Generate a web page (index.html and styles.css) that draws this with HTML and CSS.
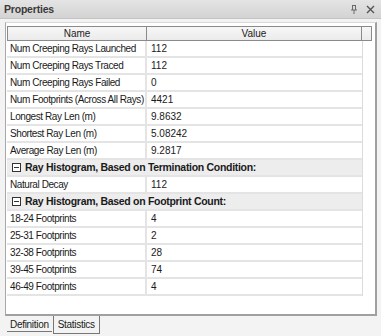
FILE: index.html
```html
<!DOCTYPE html>
<html>
<head>
<meta charset="utf-8">
<link rel="stylesheet" href="styles.css">
</head>
<body>
<div class="win">
  <div class="titlebar">
    <span class="title">Properties</span>
    <span class="tbicons">
      <svg width="8" height="9" viewBox="0 0 8 9"><path d="M2 0.5h4M2.5 0.5v4.5M5.5 0.5v4.5M1 5h6M4 5v4" stroke="#6a6a6a" fill="none" stroke-width="1"/></svg>
      <svg width="9" height="9" viewBox="0 0 9 9"><path d="M1 1l7 7M8 1l-7 7" stroke="#555" stroke-width="1.4" fill="none"/></svg>
    </span>
  </div>
  <div class="body">
    <div class="panel">
      <div class="grid">
        <div class="head">
          <div class="hc hname">Name</div>
          <div class="hc hval">Value</div>
          <div class="hc hpad"></div>
        </div>
        <div class="rows">
          <div class="row"><div class="cn">Num Creeping Rays Launched</div><div class="cv">112</div></div>
          <div class="row"><div class="cn">Num Creeping Rays Traced</div><div class="cv">112</div></div>
          <div class="row"><div class="cn">Num Creeping Rays Failed</div><div class="cv">0</div></div>
          <div class="row"><div class="cn">Num Footprints (Across All Rays)</div><div class="cv">4421</div></div>
          <div class="row"><div class="cn">Longest Ray Len (m)</div><div class="cv">9.8632</div></div>
          <div class="row"><div class="cn">Shortest Ray Len (m)</div><div class="cv">5.08242</div></div>
          <div class="row"><div class="cn">Average Ray Len (m)</div><div class="cv">9.2817</div></div>
          <div class="row cat"><span class="box"></span><span class="ct">Ray Histogram, Based on Termination Condition:</span></div>
          <div class="row"><div class="cn">Natural Decay</div><div class="cv">112</div></div>
          <div class="row cat"><span class="box"></span><span class="ct">Ray Histogram, Based on Footprint Count:</span></div>
          <div class="row"><div class="cn">18-24 Footprints</div><div class="cv">4</div></div>
          <div class="row"><div class="cn">25-31 Footprints</div><div class="cv">2</div></div>
          <div class="row"><div class="cn">32-38 Footprints</div><div class="cv">28</div></div>
          <div class="row"><div class="cn">39-45 Footprints</div><div class="cv">74</div></div>
          <div class="row"><div class="cn">46-49 Footprints</div><div class="cv">4</div></div>
        </div>
      </div>
    </div>
    <div class="tabs">
      <div class="tab">Definition</div>
      <div class="tab sel">Statistics</div>
    </div>
  </div>
</div>
</body>
</html>
```
FILE: styles.css
```css
html, body { margin: 0; padding: 0; }
body {
  width: 381px; height: 336px; overflow: hidden;
  background: #f0f0f0;
  font-family: "Liberation Sans", Arial, sans-serif;
  font-size: 10px; color: #1a1a1a;
}
.win { width: 381px; height: 336px; display: flex; flex-direction: column; }
.titlebar {
  height: 19px; box-sizing: border-box;
  background: linear-gradient(#e4e4e4, #d3d3d3);
  border-bottom: 1px solid #c4c4c4;
  display: flex; align-items: center; justify-content: space-between;
  padding: 0 6px 0 4px;
}
.title { font-weight: bold; color: #3a3a3a; font-size: 10.5px; letter-spacing: -0.2px; }
.tbicons { display: flex; gap: 8px; align-items: center; }
.body { flex: 1; display: flex; flex-direction: column; padding: 3px 4px 0 5px; background: #f3f3f3; }
.panel {
  height: 294px; box-sizing: border-box;
  background: #fff;
  border-left: 1px solid #a8a8a8;
  border-top: 1px solid #d8d8d8;
  border-right: 2px solid #a0a0a0;
  border-bottom: 2px solid #a0a0a0;
  padding: 3px 3px 0 1px;
}
.grid { width: 365px; }
.head { display: flex; height: 15px; }
.hc {
  box-sizing: border-box; height: 15px;
  background: linear-gradient(#f7f7f7, #ebebeb);
  border-top: 1px solid #8a8a8a;
  border-bottom: 1px solid #8a8a8a;
  border-right: 1px solid #8a8a8a;
  text-align: center; line-height: 13px; color: #222;
}
.hname { width: 140px; border-left: 1px solid #8a8a8a; }
.hval { width: 215px; }
.hpad { width: 10px; }
.rows { width: 355px; border-right: 1px solid #dcdcdc; }
.row {
  display: flex; height: 15px; border-bottom: 2px solid #e4e4e4;
  line-height: 15px; white-space: nowrap; overflow: hidden;
}
.cn { width: 140px; box-sizing: border-box; padding-left: 3px; border-right: 2px solid #e4e4e4; overflow: hidden; letter-spacing: -0.42px; }
.cv { padding-left: 4px; }
.cat { background: #ededed; font-weight: bold; align-items: center; }
.box {
  width: 7px; height: 7px; border: 1px solid #333; background: #fff;
  margin-left: 5px; margin-right: 4px; position: relative; flex: none;
}
.box::after { content: ""; position: absolute; left: 1px; top: 3px; width: 5px; height: 1px; background: #333; }
.ct { letter-spacing: -0.3px; font-size: 10.5px; }
.tabs { display: flex; align-items: flex-start; padding-left: 2px; }
.tab { padding: 0 3px; height: 13px; line-height: 13px; border-bottom: 1px solid #777; margin-top: 2px; letter-spacing: -0.3px; }
.sel {
  height: 17px; line-height: 17px; margin-top: 0;
  border: 1px solid #777; border-top: none; padding: 0 4px; margin-left: 1px;
  background: #f3f3f3;
}
```
